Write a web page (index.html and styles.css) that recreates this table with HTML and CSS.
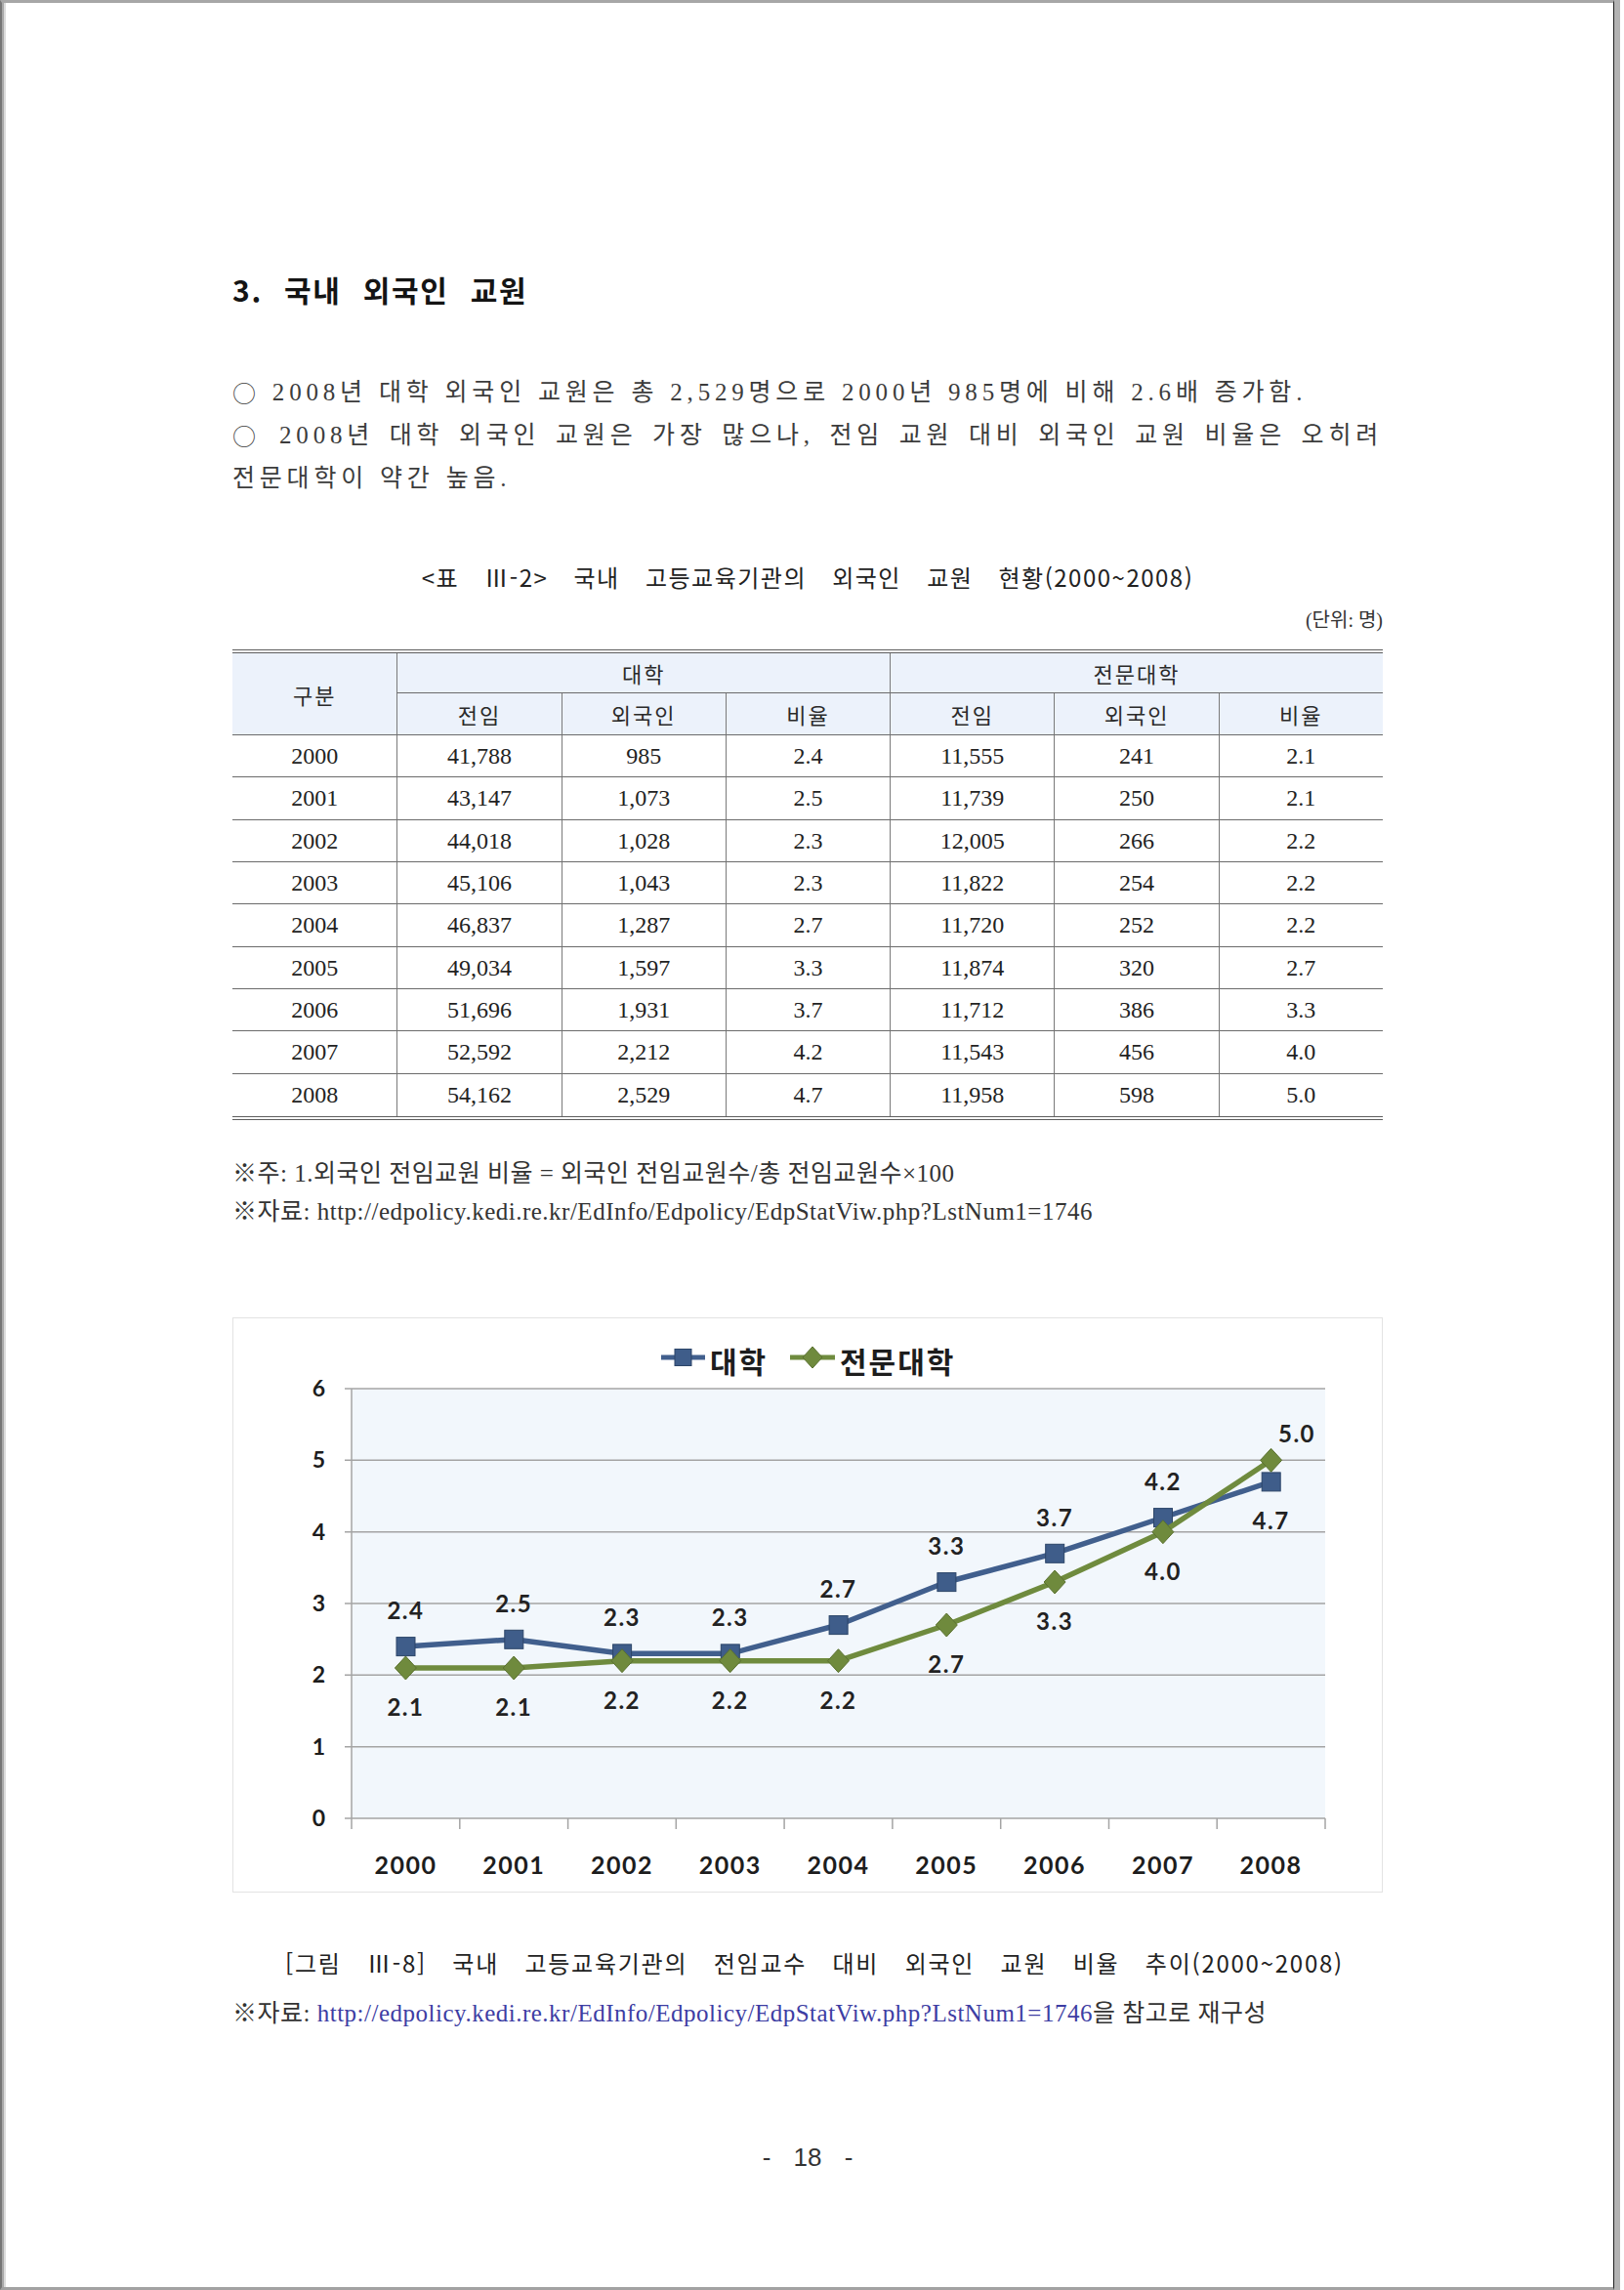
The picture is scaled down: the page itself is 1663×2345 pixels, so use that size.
FILE: index.html
```html
<!DOCTYPE html>
<html lang="ko">
<head>
<meta charset="utf-8">
<title>국내 외국인 교원</title>
<link rel="stylesheet" href="styles.css">
</head>
<body>
<div class="frame">
  <div class="content">
    <h2 class="sec-title">3. 국내 외국인 교원</h2>
    <p class="para first-para"><span class="bullet">○</span> 2008년 대학 외국인 교원은 총 2,529명으로 2000년 985명에 비해 2.6배 증가함.</p>
    <p class="para"><span class="bullet">○</span> 2008년 대학 외국인 교원은 가장 많으나, 전임 교원 대비 외국인 교원 비율은 오히려 전문대학이 약간 높음.</p>

    <div class="caption tbl-cap">&lt;표 Ⅲ-2&gt; 국내 고등교육기관의 외국인 교원 현황(2000~2008)</div>
    <div class="unit">(단위: 명)</div>

    <div class="tbl-wrap">
      <table class="data">
        <thead>
          <tr class="h1">
            <th rowspan="2" class="c0">구분</th>
            <th colspan="3">대학</th>
            <th colspan="3">전문대학</th>
          </tr>
          <tr class="h2">
            <th>전임</th><th>외국인</th><th>비율</th>
            <th>전임</th><th>외국인</th><th>비율</th>
          </tr>
        </thead>
        <tbody>
          <tr><td class="c0">2000</td><td>41,788</td><td>985</td><td>2.4</td><td>11,555</td><td>241</td><td>2.1</td></tr>
          <tr><td class="c0">2001</td><td>43,147</td><td>1,073</td><td>2.5</td><td>11,739</td><td>250</td><td>2.1</td></tr>
          <tr><td class="c0">2002</td><td>44,018</td><td>1,028</td><td>2.3</td><td>12,005</td><td>266</td><td>2.2</td></tr>
          <tr><td class="c0">2003</td><td>45,106</td><td>1,043</td><td>2.3</td><td>11,822</td><td>254</td><td>2.2</td></tr>
          <tr><td class="c0">2004</td><td>46,837</td><td>1,287</td><td>2.7</td><td>11,720</td><td>252</td><td>2.2</td></tr>
          <tr><td class="c0">2005</td><td>49,034</td><td>1,597</td><td>3.3</td><td>11,874</td><td>320</td><td>2.7</td></tr>
          <tr><td class="c0">2006</td><td>51,696</td><td>1,931</td><td>3.7</td><td>11,712</td><td>386</td><td>3.3</td></tr>
          <tr><td class="c0">2007</td><td>52,592</td><td>2,212</td><td>4.2</td><td>11,543</td><td>456</td><td>4.0</td></tr>
          <tr class="last"><td class="c0">2008</td><td>54,162</td><td>2,529</td><td>4.7</td><td>11,958</td><td>598</td><td>5.0</td></tr>
        </tbody>
      </table>
    </div>

    <p class="note note-first">※주: 1.외국인 전임교원 비율 = 외국인 전임교원수/총 전임교원수×100</p>
    <p class="note">※자료: http://edpolicy.kedi.re.kr/EdInfo/Edpolicy/EdpStatViw.php?LstNum1=1746</p>

    <div class="chart">
      <svg class="chart-svg" width="1178" height="589" viewBox="0 0 1178 589" xmlns="http://www.w3.org/2000/svg">
        <rect x="0.5" y="0.5" width="1177" height="588" fill="#ffffff" stroke="#e3e3e3"/>
        <rect x="122" y="73" width="997" height="440" fill="#f2f7fc"/>
        <g stroke="#a4a4a4" stroke-width="1.5">
          <line x1="115" y1="73" x2="1119" y2="73"/>
          <line x1="115" y1="146.3" x2="1119" y2="146.3"/>
          <line x1="115" y1="219.7" x2="1119" y2="219.7"/>
          <line x1="115" y1="293" x2="1119" y2="293"/>
          <line x1="115" y1="366.3" x2="1119" y2="366.3"/>
          <line x1="115" y1="439.7" x2="1119" y2="439.7"/>
          <line x1="115" y1="513" x2="1119" y2="513"/>
          <line x1="122" y1="73" x2="122" y2="524"/>
          <line x1="232.8" y1="513" x2="232.8" y2="524"/>
          <line x1="343.6" y1="513" x2="343.6" y2="524"/>
          <line x1="454.3" y1="513" x2="454.3" y2="524"/>
          <line x1="565.1" y1="513" x2="565.1" y2="524"/>
          <line x1="675.9" y1="513" x2="675.9" y2="524"/>
          <line x1="786.7" y1="513" x2="786.7" y2="524"/>
          <line x1="897.5" y1="513" x2="897.5" y2="524"/>
          <line x1="1008.2" y1="513" x2="1008.2" y2="524"/>
          <line x1="1119" y1="513" x2="1119" y2="524"/>
        </g>
        <g class="ylab" text-anchor="end">
          <text x="95" y="81">6</text>
          <text x="95" y="154.3">5</text>
          <text x="95" y="227.7">4</text>
          <text x="95" y="301">3</text>
          <text x="95" y="374.3">2</text>
          <text x="95" y="447.7">1</text>
          <text x="95" y="521">0</text>
        </g>
        <g class="xlab" text-anchor="middle">
          <text x="177.4" y="570">2000</text>
          <text x="288.2" y="570">2001</text>
          <text x="399" y="570">2002</text>
          <text x="509.7" y="570">2003</text>
          <text x="620.5" y="570">2004</text>
          <text x="731.3" y="570">2005</text>
          <text x="842.1" y="570">2006</text>
          <text x="952.9" y="570">2007</text>
          <text x="1063.6" y="570">2008</text>
        </g>

        <polyline fill="none" stroke="#415f8d" stroke-width="5.5" stroke-linejoin="round"
          points="177.4,337 288.2,329.7 399,344.3 509.7,344.3 620.5,315 731.3,271 842.1,241.7 952.9,205 1063.6,168.3"/>
        <g fill="#3f5d8a" stroke="#2c4568" stroke-width="1">
          <rect x="168" y="327.6" width="19" height="19"/>
          <rect x="278.8" y="320.3" width="19" height="19"/>
          <rect x="389.6" y="334.9" width="19" height="19"/>
          <rect x="500.3" y="334.9" width="19" height="19"/>
          <rect x="611.1" y="305.6" width="19" height="19"/>
          <rect x="721.9" y="261.6" width="19" height="19"/>
          <rect x="832.7" y="232.3" width="19" height="19"/>
          <rect x="943.5" y="195.6" width="19" height="19"/>
          <rect x="1054.2" y="158.9" width="19" height="19"/>
        </g>

        <polyline fill="none" stroke="#6f8b3e" stroke-width="5.5" stroke-linejoin="round"
          points="177.4,359 288.2,359 399,351.7 509.7,351.7 620.5,351.7 731.3,315 842.1,271 952.9,219.7 1063.6,146.3"/>
        <g fill="#6f8a3d" stroke="#5a7130" stroke-width="1">
          <polygon points="177.4,347 188.4,359 177.4,371 166.4,359"/>
          <polygon points="288.2,347 299.2,359 288.2,371 277.2,359"/>
          <polygon points="399,339.7 410,351.7 399,363.7 388,351.7"/>
          <polygon points="509.7,339.7 520.7,351.7 509.7,363.7 498.7,351.7"/>
          <polygon points="620.5,339.7 631.5,351.7 620.5,363.7 609.5,351.7"/>
          <polygon points="731.3,303 742.3,315 731.3,327 720.3,315"/>
          <polygon points="842.1,259 853.1,271 842.1,283 831.1,271"/>
          <polygon points="952.9,207.7 963.9,219.7 952.9,231.7 941.9,219.7"/>
          <polygon points="1063.6,134.3 1074.6,146.3 1063.6,158.3 1052.6,146.3"/>
        </g>

        <g class="dlab" text-anchor="middle">
          <text x="177.4" y="309">2.4</text>
          <text x="288.2" y="301.7">2.5</text>
          <text x="399" y="316.3">2.3</text>
          <text x="509.7" y="316.3">2.3</text>
          <text x="620.5" y="287">2.7</text>
          <text x="731.3" y="243">3.3</text>
          <text x="842.1" y="213.7">3.7</text>
          <text x="952.9" y="177">4.2</text>
          <text x="1063.6" y="217.3">4.7</text>

          <text x="177.4" y="408">2.1</text>
          <text x="288.2" y="408">2.1</text>
          <text x="399" y="400.7">2.2</text>
          <text x="509.7" y="400.7">2.2</text>
          <text x="620.5" y="400.7">2.2</text>
          <text x="731.3" y="364">2.7</text>
          <text x="842.1" y="320">3.3</text>
          <text x="952.9" y="268.7">4.0</text>
          <text x="1090" y="128">5.0</text>
        </g>

        <g class="legend">
          <line x1="439" y1="41" x2="484" y2="41" stroke="#415f8d" stroke-width="5"/>
          <rect x="453" y="32.5" width="17" height="17" fill="#3f5d8a" stroke="#2c4568"/>
          <text x="489" y="57">대학</text>
          <line x1="571" y1="41" x2="617" y2="41" stroke="#6f8b3e" stroke-width="5"/>
          <polygon points="594,30 604,41 594,52 584,41" fill="#6f8a3d" stroke="#5a7130"/>
          <text x="622" y="57">전문대학</text>
        </g>
      </svg>
    </div>

    <div class="caption fig-cap">[그림 Ⅲ-8] 국내 고등교육기관의 전임교수 대비 외국인 교원 비율 추이(2000~2008)</div>
    <p class="note src">※자료: <span class="link">http://edpolicy.kedi.re.kr/EdInfo/Edpolicy/EdpStatViw.php?LstNum1=1746</span>을 참고로 재구성</p>

    <div class="pageno">- 18 -</div>
  </div>
</div>
</body>
</html>
```

FILE: styles.css
```css
html, body {
  margin: 0;
  padding: 0;
  background: #ffffff;
}

.frame {
  width: 1653px;
  height: 2345px;
  box-sizing: border-box;
  background: #ffffff;
  border-top: 3px solid #a7a7a7;
  border-bottom: 3px solid #a2a2a2;
  border-left: 2px solid #767676;
  border-right: 1px solid #1e1e1e;
  box-shadow: inset 2px 0 0 #a9a9a9, inset 4px 0 0 #dcdcdc, 6px 0 0 #b3b3b3;
  overflow: hidden;
}

.content {
  width: 1178px;
  padding: 273px 0 0 236px;
}

.sec-title {
  margin: 0;
  height: 40px;
  font-family: "Noto Sans CJK KR", sans-serif;
  font-weight: 700;
  font-size: 30px;
  line-height: 40px;
  letter-spacing: 1.7px;
  word-spacing: 12px;
  color: #141414;
}

.para {
  margin: 0;
  font-family: "Liberation Serif", "Noto Sans CJK KR", serif;
  font-size: 25px;
  line-height: 44px;
  letter-spacing: 4.8px;
  word-spacing: 1px;
  text-align: justify;
  word-break: keep-all;
  color: #3c3c3c;
}

.bullet {
  font-family: "Noto Sans CJK KR", sans-serif;
  font-weight: 300;
  font-size: 24px;
  line-height: 44px;
  vertical-align: top;
}

.first-para {
  margin-top: 64px;
}

.caption {
  font-family: "Noto Sans CJK KR", sans-serif;
  font-size: 24px;
  line-height: 36px;
  letter-spacing: 1.5px;
  word-spacing: 18px;
  text-align: center;
  color: #222222;
}

.tbl-cap {
  margin-top: 61px;
}

.unit {
  margin-top: 12px;
  font-family: "Liberation Serif", "Noto Sans CJK KR", serif;
  font-size: 20px;
  line-height: 28px;
  text-align: right;
  color: #333333;
}

.tbl-wrap {
  margin-top: 16px;
  border-top: 4px double #5e5e5e;
  border-bottom: 4px double #5e5e5e;
}

.data {
  width: 100%;
  table-layout: fixed;
  border-collapse: separate;
  border-spacing: 0;
}

.data th,
.data td {
  padding: 0;
  text-align: center;
  vertical-align: middle;
  border-bottom: 1px solid #6b6b6b;
  border-left: 1px solid #7a7a7a;
}

.data .c0 {
  border-left: none;
}

.data th {
  background: #ecf2fb;
  font-family: "Noto Sans CJK KR", sans-serif;
  font-weight: 400;
  font-size: 22px;
  letter-spacing: 2px;
  color: #2a2a2a;
  line-height: 30px;
}

.data tr.h1 {
  height: 41px;
}

.data tr.h2 {
  height: 43px;
}

.data tbody tr {
  height: 43.33px;
}

.data td {
  font-family: "Liberation Serif", serif;
  font-size: 24px;
  line-height: 30px;
  color: #222222;
}

.data tr.last td {
  border-bottom: none;
}

.note {
  margin: 0;
  font-family: "Liberation Serif", "Noto Sans CJK KR", serif;
  font-size: 25px;
  line-height: 39px;
  letter-spacing: 0.5px;
  color: #333333;
}

.note-first {
  margin-top: 35.5px;
}

.chart {
  margin-top: 88.5px;
  height: 589px;
}

.chart-svg {
  display: block;
}

.ylab text {
  font-family: Lato, "Liberation Sans", sans-serif;
  font-weight: 700;
  font-size: 23px;
  fill: #1d1d1d;
}

.xlab text {
  font-family: Lato, "Liberation Sans", sans-serif;
  font-weight: 700;
  font-size: 25px;
  letter-spacing: 1.5px;
  fill: #1d1d1d;
}

.dlab text {
  font-family: Lato, "Liberation Sans", sans-serif;
  font-weight: 700;
  font-size: 24px;
  letter-spacing: 1.5px;
  fill: #222222;
}

.legend text {
  font-family: "Noto Sans CJK KR", sans-serif;
  font-weight: 700;
  font-size: 30px;
  letter-spacing: 2px;
  fill: #1d1d1d;
}

.fig-cap {
  margin-top: 54px;
  padding-left: 14px;
  letter-spacing: 1.75px;
}

.src {
  margin-top: 16px;
  line-height: 36px;
}

.link {
  color: #3d3da3;
}

.pageno {
  margin-top: 111px;
  font-family: "Liberation Sans", sans-serif;
  font-size: 26px;
  line-height: 36px;
  word-spacing: 16px;
  text-align: center;
  color: #333333;
}
```
